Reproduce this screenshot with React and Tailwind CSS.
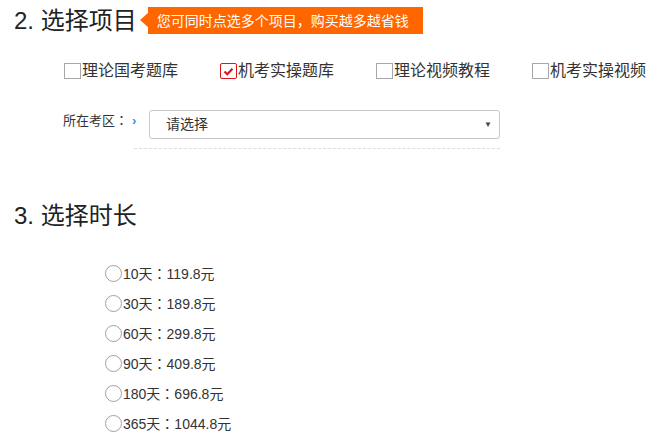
const projects = [
  { label: "理论国考题库", checked: false },
  { label: "机考实操题库", checked: true },
  { label: "理论视频教程", checked: false },
  { label: "机考实操视频", checked: false },
];

const durations = [
  ["10天", "119.8元"],
  ["30天", "189.8元"],
  ["60天", "299.8元"],
  ["90天", "409.8元"],
  ["180天", "696.8元"],
  ["365天", "1044.8元"],
];

const Colon = () => (
  <span style={{ fontFamily: '"Noto Sans CJK TC", sans-serif' }}>：</span>
);

const Checkbox = ({ checked }) =>
  checked ? (
    <span className="w-[17px] h-[16px] border border-[#d9161c] rounded-[2px] bg-white flex items-center justify-center shrink-0">
      <svg width="11" height="9" viewBox="0 0 11 9">
        <path d="M1.5 4.5 L4.3 7.2 L9.5 1.8" stroke="#d9161c" strokeWidth="2.2" fill="none" />
      </svg>
    </span>
  ) : (
    <span className="w-[17px] h-[16px] border border-[#a8a8a8] bg-white shrink-0" />
  );

const App = () => {
  return (
    <div
      className="w-[665px] h-[443px] overflow-hidden bg-white text-[#333]"
      style={{ fontFamily: '"Liberation Sans", "Noto Sans CJK SC", sans-serif' }}
    >
      {/* 2. 选择项目 */}
      <header className="flex items-center pt-[7px] pl-[14px]">
        <h2 className="text-[24px] leading-[27px] font-normal text-[#222]">2. 选择项目</h2>
        <div className="relative ml-[11px] h-[27px] bg-[#ff6600] pl-[9px] pr-[14px] flex items-center text-white text-[14px] leading-none">
          <span className="absolute left-[-8px] top-[6px] w-0 h-0 border-y-[7px] border-y-transparent border-r-[8px] border-r-[#ff6600]" />
          您可同时点选多个项目，购买越多越省钱
        </div>
      </header>

      {/* Projects */}
      <div className="flex pl-[64px] mt-[29px] h-[16px]">
        {projects.map((p) => (
          <label key={p.label} className="w-[156px] shrink-0 flex items-center gap-[1px] text-[16px] leading-[16px] text-[#333]">
            <Checkbox checked={p.checked} />
            <span className="whitespace-nowrap">{p.label}</span>
          </label>
        ))}
      </div>

      {/* Area */}
      <div className="flex items-start mt-[31px] pl-[63px]">
        <div className="w-[86px] shrink-0 flex items-start">
          <span className="text-[13px] leading-[14px] mt-[3px] whitespace-nowrap">
            所在考区<Colon />
          </span>
          <span className="text-[#2f8cf0] text-[13px] leading-[12px] mt-[5px] ml-[4px] font-bold">›</span>
        </div>
        <div className="w-[351px] h-[29px] border border-[#c8c8c8] rounded-[3px] flex items-center justify-between pl-[16px] pr-[7px]">
          <span className="text-[14px]">请选择</span>
          <span className="text-[8px] text-[#444]">▼</span>
        </div>
      </div>
      <div className="ml-[134px] w-[366px] mt-[9px] border-t border-dashed border-[#ddd]" />

      {/* 3. 选择时长 */}
      <h2 className="pl-[14px] mt-[53px] text-[24px] leading-[28px] font-normal text-[#222]">3. 选择时长</h2>

      <ul className="mt-[28px] pl-[105px]">
        {durations.map(([days, price]) => (
          <li key={days} className="h-[30px] flex items-center">
            <span className="w-[17px] h-[17px] rounded-full border-[1.5px] border-[#a0a0a0] bg-white shrink-0" />
            <span className="text-[14px] leading-none ml-[1px] text-[#333] whitespace-nowrap">
              {days}
              <Colon />
              {price}
            </span>
          </li>
        ))}
      </ul>
    </div>
  );
};

export default App;
